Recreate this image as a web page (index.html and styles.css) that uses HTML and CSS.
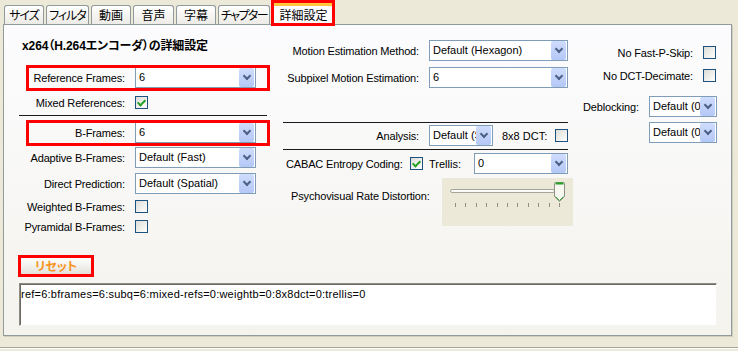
FILE: index.html
```html
<!DOCTYPE html>
<html lang="ja">

<head>
    <meta charset="UTF-8">
    <title>詳細設定</title>
    <link rel="stylesheet" href="styles.css">
</head>

<body>
    <!-- タブ -->
    <ul class="tabs">
        <li class="t-size">サイズ</li>
        <li class="t-filter">フィルタ</li>
        <li class="t-video">動画</li>
        <li class="t-audio">音声</li>
        <li class="t-sub">字幕</li>
        <li class="t-chapter">チャプター</li>
        <li class="t-adv on">詳細設定</li>
    </ul>

    <div class="panel">
        <div class="cols">
            <!-- 左の列 -->
            <div class="col col-left">
                <h1 class="title">x264（H.264エンコーダ）の詳細設定</h1>
                <div class="row row-ref mark">
                    <span class="lbl">Reference Frames:</span>
                    <div class="combo"><span>6</span><i></i></div>
                </div>
                <div class="row row-cb row-mixed">
                    <span class="lbl">Mixed References:</span>
                    <span class="cb checked"></span>
                </div>
                <div class="sep sep-left"></div>
                <div class="row row-bframes mark">
                    <span class="lbl">B-Frames:</span>
                    <div class="combo"><span>6</span><i></i></div>
                </div>
                <div class="row row-adapt">
                    <span class="lbl">Adaptive B-Frames:</span>
                    <div class="combo"><span>Default (Fast)</span><i></i></div>
                </div>
                <div class="row row-direct">
                    <span class="lbl">Direct Prediction:</span>
                    <div class="combo"><span>Default (Spatial)</span><i></i></div>
                </div>
                <div class="row row-cb row-weighted">
                    <span class="lbl">Weighted B-Frames:</span>
                    <span class="cb"></span>
                </div>
                <div class="row row-cb row-pyramid">
                    <span class="lbl">Pyramidal B-Frames:</span>
                    <span class="cb"></span>
                </div>
            </div>

            <!-- 真ん中の列 -->
            <div class="col col-mid">
                <div class="row row-me">
                    <span class="lbl">Motion Estimation Method:</span>
                    <div class="combo"><span>Default (Hexagon)</span><i></i></div>
                </div>
                <div class="row row-subme">
                    <span class="lbl">Subpixel Motion Estimation:</span>
                    <div class="combo"><span>6</span><i></i></div>
                </div>
                <div class="sep sep-mid1"></div>
                <div class="row row-analysis">
                    <span class="lbl">Analysis:</span>
                    <div class="combo combo-small"><span>Default (Some)</span><i></i></div>
                    <span class="lbl-dct">8x8 DCT:</span>
                    <span class="cb"></span>
                </div>
                <div class="sep sep-mid2"></div>
                <div class="row row-cabac">
                    <span class="lbl">CABAC Entropy Coding:</span>
                    <span class="cb checked"></span>
                    <span class="lbl-trellis">Trellis:</span>
                    <div class="combo combo-trellis"><span>0</span><i></i></div>
                </div>
                <div class="row row-psy">
                    <span class="lbl">Psychovisual Rate Distortion:</span>
                    <div class="slider">
                        <div class="track"></div>
                        <div class="ticks">
                            <b></b><b></b><b></b><b></b><b></b><b></b><b></b><b></b><b></b><b></b><b></b>
                        </div>
                        <svg class="thumb" width="11" height="20" viewBox="0 0 11 20">
                            <path d="M0.5 1.5 Q0.5 0.5 1.5 0.5 H9.5 Q10.5 0.5 10.5 1.5 V14.5 L5.5 19.5 L0.5 14.5 Z" fill="#F7F6EF" stroke="#8E8F86" />
                            <path d="M1.5 1.5 H9.5" stroke="#21A121" stroke-width="2" />
                            <path d="M1.5 14.5 L5.5 18.5 L9.5 14.5" fill="none" stroke="#3BB03B" />
                        </svg>
                    </div>
                </div>
            </div>

            <!-- 右の列 -->
            <div class="col col-right">
                <div class="row row-cb row-fastp">
                    <span class="lbl">No Fast-P-Skip:</span>
                    <span class="cb"></span>
                </div>
                <div class="row row-cb row-dct">
                    <span class="lbl">No DCT-Decimate:</span>
                    <span class="cb"></span>
                </div>
                <div class="row row-deblock">
                    <span class="lbl">Deblocking:</span>
                    <div class="combo combo-deblock"><span>Default (0)</span><i></i></div>
                </div>
                <div class="row row-deblock2">
                    <div class="combo combo-deblock"><span>Default (0)</span><i></i></div>
                </div>
            </div>
        </div>

        <button class="reset">リセット</button>
        <div class="cmd">ref=6:bframes=6:subq=6:mixed-refs=0:weightb=0:8x8dct=0:trellis=0</div>
    </div>

    <div class="footer"></div>
</body>

</html>
```

FILE: styles.css
```css
html,
body,
ul,
li,
h1 {
    padding: 0;
    margin: 0;
}

ul {
    list-style: none;
}

body {
    width: 738px;
    height: 351px;
    overflow: hidden;
    background-color: #ECE9D8;
    font-family: "Liberation Sans", "Noto Sans CJK JP", sans-serif;
    font-size: 11px;
    color: #000;
}

/* タブ */

.tabs {
    display: flex;
    align-items: flex-end;
    gap: 2px;
    height: 24px;
    padding-left: 4px;
    font-family: "Noto Sans CJK JP", sans-serif;
    font-size: 12px;
    font-feature-settings: "palt";
}

.tabs li {
    box-sizing: border-box;
    height: 19px;
    border: 1px solid #919B9C;
    border-bottom: none;
    border-radius: 3px 3px 0 0;
    background: linear-gradient(#FFFFFF, #ECEBE6);
    text-align: center;
    line-height: 18px;
    white-space: nowrap;
}

.tabs .t-size { width: 40px; letter-spacing: -1px; }
.tabs .t-filter { width: 43px; letter-spacing: -1px; }
.tabs .t-video { width: 40px; }
.tabs .t-audio { width: 41px; }
.tabs .t-sub { width: 40px; }
.tabs .t-chapter { width: 52px; letter-spacing: -1.6px; }

.tabs li.on {
    position: relative;
    z-index: 2;
    width: 61px;
    height: 22px;
    margin-left: 1px;
    margin-bottom: -1px;
    border-top: 3px solid #FFC83C;
    border-radius: 0;
    background: #FCFCFE;
    line-height: 18px;
}

.tabs li.on::after {
    content: "";
    position: absolute;
    left: -3px;
    right: -2px;
    top: -6px;
    bottom: -1px;
    border: 3px solid #F00;
}

/* パネル */

.panel {
    box-sizing: border-box;
    width: 729px;
    height: 312px;
    margin-left: 3px;
    padding: 0 13px 0 15px;
    border: 1px solid #919B9C;
    box-shadow: 1px 1px 0 #D0CEBF;
    background: linear-gradient(#FCFCFE, #F4F3EE);
}

.cols {
    display: flex;
    height: 230px;
}

.col-left {
    width: 248px;
    flex: none;
}

.col-mid {
    width: 285px;
    margin-left: 16px;
    flex: none;
}

.col-right {
    width: 135px;
    margin-left: 15px;
    flex: none;
}

.title {
    margin-top: 13px;
    height: 16px;
    padding-left: 3px;
    font-size: 12px;
    font-weight: bold;
    line-height: 16px;
    letter-spacing: -0.1px;
    font-feature-settings: "palt";
    white-space: nowrap;
}

.row {
    position: relative;
    display: flex;
    align-items: center;
    height: 21px;
}

.row-cb {
    height: 15px;
}

.lbl {
    flex: none;
    white-space: nowrap;
    letter-spacing: -0.15px;
}

.mark::after {
    content: "";
    position: absolute;
    left: 7px;
    right: -3px;
    top: -2px;
    bottom: -3px;
    border: 3px solid #F00;
}

.sep {
    height: 1px;
    background-color: #1A1A1A;
}

/* 左の列 */

.col-left .lbl {
    width: 106px;
    text-align: right;
}

.col-left .combo {
    width: 121px;
    margin-left: 10px;
}

.col-left .cb {
    margin-left: 10px;
}

.row-ref { margin-top: 13px; }
.row-mixed { margin-top: 7px; }
.sep-left { margin-top: 5px; width: 248px; }
.row-bframes { margin-top: 6px; }
.row-adapt { margin-top: 4px; }
.row-direct { margin-top: 5px; }
.row-weighted { margin-top: 5px; }
.row-pyramid { margin-top: 5px; }

/* 真ん中の列 */

.col-mid .lbl {
    width: 136px;
    text-align: right;
}

.col-mid .combo {
    width: 139px;
    margin-left: 10px;
}

.row-me { margin-top: 15px; }
.row-subme { margin-top: 6px; }
.sep-mid1 { margin-top: 34px; }
.row-analysis { margin-top: 2px; }
.sep-mid2 { margin-top: 3px; }
.row-cabac { margin-top: 3px; }

.col-mid .combo-small {
    width: 64px;
}

.lbl-dct {
    margin-left: 9px;
}

.row-analysis .cb {
    margin-left: auto;
}

.row-cabac .lbl {
    box-sizing: border-box;
    width: 127px;
    padding-left: 3px;
    text-align: left;
}

.lbl-trellis {
    margin-left: 6px;
}

.col-mid .combo-trellis {
    width: 94px;
    margin-left: auto;
}

.row-psy {
    margin-top: 4px;
    height: 48px;
    align-items: flex-start;
}

.row-psy .lbl {
    box-sizing: border-box;
    width: 159px;
    margin-top: 12px;
    padding-left: 8px;
    text-align: left;
}

/* スライダー */

.slider {
    position: relative;
    flex: none;
    width: 131px;
    height: 48px;
    background-color: #ECE9D8;
}

.slider .track {
    box-sizing: border-box;
    width: 105px;
    height: 4px;
    margin: 11px 0 0 8px;
    border: 1px solid #A7A69C;
    border-radius: 2px;
    background-color: #FAFAF7;
}

.slider .ticks {
    display: flex;
    justify-content: space-between;
    width: 105px;
    height: 4px;
    margin: 10px 0 0 13px;
}

.slider .ticks b {
    width: 1px;
    background-color: #8F8F86;
}

.slider .thumb {
    position: absolute;
    left: 112px;
    top: 4px;
}

/* 右の列 */

.col-right .row-cb {
    justify-content: flex-end;
}

.col-right .cb {
    margin: 0 2px 0 10px;
}

.row-fastp { margin-top: 20px; }
.row-dct { margin-top: 8px; }
.row-deblock { margin-top: 13px; }
.row-deblock2 { margin-top: 5px; padding-left: 66px; }

.row-deblock .lbl {
    width: 66px;
}

.combo-deblock {
    width: 68px;
}

/* コンボボックス */

.combo {
    box-sizing: border-box;
    display: flex;
    flex: none;
    height: 21px;
    border: 1px solid #7F9DB9;
    background-color: #fff;
}

.combo span {
    flex: 1;
    overflow: hidden;
    padding-left: 3px;
    line-height: 19px;
    white-space: nowrap;
}

.combo i {
    position: relative;
    flex: none;
    width: 15px;
    margin-right: 1px;
    border-radius: 2px;
    background: linear-gradient(#CFDCFD, #B4C8F6);
}

.combo i::after {
    content: "";
    position: absolute;
    left: 5px;
    top: 5px;
    width: 4px;
    height: 4px;
    border-right: 2px solid #4D6185;
    border-bottom: 2px solid #4D6185;
    transform: rotate(45deg);
}

/* チェックボックス */

.cb {
    position: relative;
    box-sizing: border-box;
    flex: none;
    width: 13px;
    height: 13px;
    border: 1px solid #1C5180;
    background: linear-gradient(135deg, #DCDCD7, #FFFFFF);
}

.cb.checked::after {
    content: "";
    position: absolute;
    left: 3px;
    top: 1px;
    width: 3px;
    height: 6px;
    border-right: 2px solid #21A121;
    border-bottom: 2px solid #21A121;
    transform: rotate(45deg);
}

/* 下のボタンとテキスト */

.reset {
    display: block;
    width: 70px;
    height: 16px;
    margin: 3px 0 0 2px;
    padding: 0;
    border: none;
    background: linear-gradient(#FFFFFF, #E3E2DA);
    outline: 3px solid #F00;
    color: #F7931E;
    font-family: "Noto Sans CJK JP", sans-serif;
    font-size: 12px;
    font-weight: bold;
    line-height: 16px;
    font-feature-settings: "palt";
}

.cmd {
    box-sizing: border-box;
    width: 698px;
    height: 43px;
    margin-top: 9px;
    padding: 4px 1px;
    border: 1px solid;
    border-color: #8E8C80 #F5F4EF #F5F4EF #8E8C80;
    box-shadow: inset 1px 1px 0 #6A6A66;
    background-color: #fff;
    line-height: 13px;
    letter-spacing: 0.23px;
    white-space: nowrap;
}

.footer {
    margin-top: 11px;
    border-top: 1px solid #A6A497;
    border-bottom: 1px solid #FFFFFF;
}
```
